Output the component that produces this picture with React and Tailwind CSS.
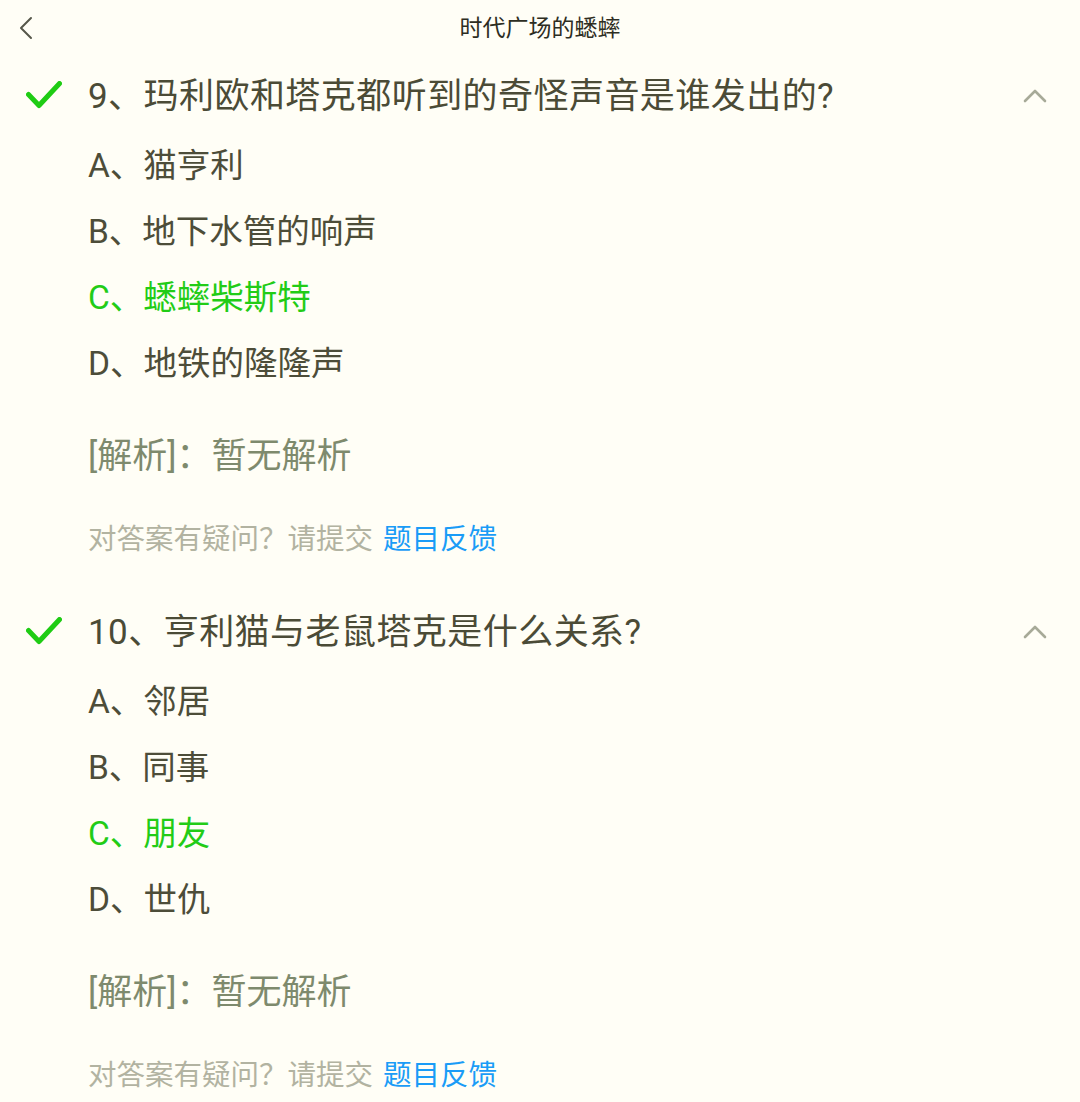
import React from 'react';

const questions = [
    {
        title: '9、玛利欧和塔克都听到的奇怪声音是谁发出的?',
        options: ['A、猫亨利', 'B、地下水管的响声', 'C、蟋蟀柴斯特', 'D、地铁的隆隆声'],
        answer: 2,
    },
    {
        title: '10、亨利猫与老鼠塔克是什么关系?',
        options: ['A、邻居', 'B、同事', 'C、朋友', 'D、世仇'],
        answer: 2,
    },
];

function CheckMark() {
    return (
        <svg width="36" height="30" viewBox="0 0 36 30" className="block">
            <path
                d="M2.5 13.5 L13 24.5 L33.5 2.5"
                fill="none"
                stroke="#1fcc14"
                strokeWidth="5"
                strokeLinecap="round"
                strokeLinejoin="round"
            />
        </svg>
    );
}

function ChevronUp() {
    return (
        <svg width="24" height="14" viewBox="0 0 24 14" className="block">
            <path d="M2 12 L12 2 L22 12" fill="none" stroke="#a7aa98" strokeWidth="2.6" strokeLinecap="round" strokeLinejoin="round" />
        </svg>
    );
}

function QuestionBlock({ q, last }) {
    return (
        <div className={last ? '' : 'mb-[24px]'}>
            {/* Question title */}
            <div className="h-[77px] pt-[3px] flex items-center">
                <div className="w-[88px] flex justify-start pl-[26px]">
                    <CheckMark />
                </div>
                <div className="flex-1 text-[35px] leading-none tracking-[0.45px] text-[#4b4b36]">{q.title}</div>
                <div className="pr-[33px]">
                    <ChevronUp />
                </div>
            </div>

            {/* Options */}
            <div className="pl-[88px]">
                {q.options.map((opt, i) => (
                    <div
                        key={opt}
                        className={`h-[66px] flex items-center text-[33.5px] leading-none ${i === q.answer ? 'text-[#22cc16]' : 'text-[#4d4d39]'}`}
                    >
                        {opt}
                    </div>
                ))}
            </div>

            {/* Analysis */}
            <div className="pl-[88px] mt-[26px] h-[66px] flex items-center text-[35px] leading-none text-[#7e8a6d]">
                [解析]：暂无解析
            </div>

            {/* Feedback */}
            <div className="pl-[88px] mt-[23px] h-[56px] flex items-center text-[28.5px] leading-none">
                <span className="text-[#b2b3a1]">对答案有疑问？请提交</span>
                <span className="ml-[10px] text-[#1a9cf7]">题目反馈</span>
            </div>
        </div>
    );
}

export default function App() {
    return (
        <div
            className="w-[1080px] h-[1102px] overflow-hidden bg-[#fffef6]"
            style={{ fontFamily: 'Roboto, "Noto Sans CJK SC", sans-serif' }}
        >
            {/* Header */}
            <div className="relative h-[56px] flex items-center justify-center">
                <div className="absolute left-[17px] top-[16px]">
                    <svg width="18" height="24" viewBox="0 0 18 24" className="block">
                        <path d="M14 2 L4 12 L14 22" fill="none" stroke="#56574a" strokeWidth="2" strokeLinecap="round" strokeLinejoin="round" />
                    </svg>
                </div>
                <h1 className="text-[23px] leading-none text-[#2d2d22] font-normal">时代广场的蟋蟀</h1>
            </div>

            {questions.map((q, i) => (
                <QuestionBlock key={q.title} q={q} last={i === questions.length - 1} />
            ))}
        </div>
    );
}
